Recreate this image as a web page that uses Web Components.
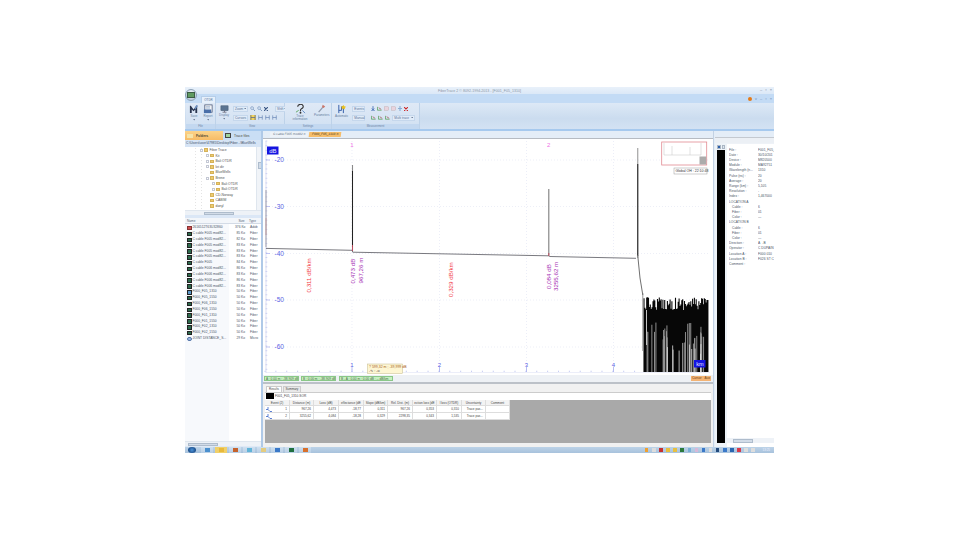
<!DOCTYPE html>
<html><head><meta charset="utf-8"><style>
html,body{margin:0;background:#fff;height:540px;overflow:hidden}
body{font-family:"Liberation Sans",sans-serif;color:#333;padding:87px 0 0 185px;box-sizing:border-box}
</style></head><body>
<ft-app>
  <ft-title slot="title"></ft-title>
  <ft-ribbon slot="ribbon"></ft-ribbon>
  <ft-left slot="left"></ft-left>
  <ft-main slot="main"></ft-main>
  <ft-right slot="right"></ft-right>
  <ft-taskbar slot="task"></ft-taskbar>
</ft-app>
<script>
function def(name,html,init){customElements.define(name,class extends HTMLElement{constructor(){super();this.attachShadow({mode:'open'}).innerHTML=html;if(init)init(this.shadowRoot)}})}
const ic={
 save:'<svg width="10" height="10" viewBox="0 0 11 11"><path d="M1 10V2h1l3 4 3-4h1v8H7V6L5 8 3 6v4z" fill="#2a3650"/><path d="M8 1l2 1-3 4-1-1z" fill="#6c8fc0"/></svg>',
 report:'<svg width="10" height="10" viewBox="0 0 11 11"><rect x="2" y="1" width="8" height="8" fill="#fff" stroke="#3c4a6c" stroke-width=".8"/><rect x="1" y="6" width="8" height="4" fill="#4a6fa8"/><path d="M3 3h5M3 4.500h5" stroke="#5c7fae" stroke-width=".6"/></svg>',
 display:'<svg width="9" height="8" viewBox="0 0 11 10"><rect x="1" y="1" width="9" height="6" fill="#5a7391" stroke="#3c4f66" stroke-width=".6"/><path d="M3 9h5M5.500 7v2" stroke="#667" stroke-width="1"/></svg>',
 info:'<svg width="11" height="10" viewBox="0 0 12 11"><path d="M3 3a3 2.500 0 1 1 4 2.200L6 6.500V8" fill="none" stroke="#333" stroke-width="1.200"/><circle cx="6" cy="9.600" r="1" fill="#333"/><path d="M8 7l3 3" stroke="#5b87c0"/><path d="M1 9l3-2" stroke="#5aa55a"/></svg>',
 params:'<svg width="9" height="9" viewBox="0 0 11 11"><path d="M2 10L7 4" stroke="#8c98ac" stroke-width="1.400"/><path d="M7 1l3 2-2 2-2-1z" fill="#c9776b"/></svg>',
 auto:'<svg width="10" height="10" viewBox="0 0 11 11"><path d="M2 10V1M2 7h3V3h2v7" fill="none" stroke="#2a55a5" stroke-width="1"/><path d="M7 1l1 1.500L10 3 8.500 4.300 9 6 7 5 5 6l.6-1.800L4 3l2-.5z" fill="#ecc11c"/></svg>',
 mag:'<svg width="5" height="5" viewBox="0 0 6 6"><circle cx="2.500" cy="2.500" r="1.700" fill="#dbe8f7" stroke="#6b8ab5" stroke-width=".7"/><path d="M4 4l2 2" stroke="#6b8ab5"/></svg>',
 x:'<svg width="4" height="4" viewBox="0 0 5 5"><path d="M0 0l5 5M5 0L0 5" stroke="#c22" stroke-width="1.300"/></svg>',
 xn:'<svg width="4" height="4" viewBox="0 0 5 5"><path d="M0 0l5 5M5 0L0 5" stroke="#3a5684" stroke-width="1.400"/></svg>',
 cur:'<svg width="5" height="5" viewBox="0 0 7 6"><path d="M1 0v6M6 0v6M1 3h5" stroke="#5f7fb0" stroke-width=".9"/></svg>',
 curY:'<svg width="6" height="5" viewBox="0 0 7 6"><rect width="7" height="6" fill="#f3d35c"/><path d="M1 0v6M6 0v6M1 3h5" stroke="#55688c" stroke-width=".9"/></svg>',
 down:'<svg width="4" height="5" viewBox="0 0 5 6"><path d="M2.500 0v4M0 6h5M1 3l1.500 2L4 3" fill="none" stroke="#2a5bab" stroke-width=".9"/></svg>',
 plug:'<svg width="4" height="5" viewBox="0 0 5 6"><path d="M0 3h5M2.500 0v6" stroke="#8aaed4" stroke-width="1.400"/></svg>',
 red:'<svg width="5" height="5" viewBox="0 0 6 6"><rect x=".5" y="1" width="5" height="4" fill="#e8d3dd" stroke="#b99" stroke-width=".4"/></svg>',
 grn:'<svg width="5" height="5" viewBox="0 0 6 6"><path d="M.5 1v4h5" fill="none" stroke="#4f9a4f" stroke-width=".9"/><path d="M2 2l3 2" stroke="#a66"/></svg>'
};
const drop='<svg width="2.500" height="1.500" viewBox="0 0 3 2"><path d="M0 0h3L1.500 2z" fill="#6a7a94"/></svg>';

def('ft-app',`<style>
:host{display:grid;width:589px;height:366px;grid-template-columns:78px 1fr 61px;grid-template-rows:7px 37px 1fr 6px;grid-template-areas:"t t t" "r r r" "l m x" "b b b";background:#dfe9f6;font-size:3.600px;overflow:hidden}
::slotted([slot=title]){grid-area:t}::slotted([slot=ribbon]){grid-area:r}::slotted([slot=left]){grid-area:l}::slotted([slot=main]){grid-area:m}::slotted([slot=right]){grid-area:x}::slotted([slot=task]){grid-area:b}
</style><slot name="title"></slot><slot name="ribbon"></slot><slot name="left"></slot><slot name="main"></slot><slot name="right"></slot><slot name="task"></slot>`);

def('ft-title',`<style>
:host{display:flex;align-items:center;justify-content:center;background:linear-gradient(#e9f1fa,#dbe8f7);font-size:3.600px;color:#8a96a6;position:relative;padding-left:0}
.w{position:absolute;right:2px;top:1px;display:flex;gap:3px;color:#6d7c90;font-size:4px;line-height:4px}
</style><span>FiberTrace 2 © 8092-1994-2013 - [F001_F05_1310]</span><span class="w"><span>–</span><span>▫</span><span>×</span></span>`);

def('ft-ribbon',`<style>
:host{display:flex;flex-direction:column;font-size:3.300px;color:#5a7296;position:relative}
.tabs{height:9px;background:#c3dbf5;display:flex;align-items:flex-end;padding-left:16px;box-sizing:border-box;position:relative}
.tab{height:7px;width:15px;background:#e6f0fb;border:.5px solid #b6cee9;border-bottom:0;box-sizing:border-box;display:flex;align-items:center;justify-content:center;font-size:3px;color:#55709a}
.orb{position:absolute;left:0;top:-5px;width:12px;height:12px;border-radius:50%;background:radial-gradient(circle at 50% 30%,#f2f7fc,#b0c2d4);border:.5px solid #8ea2b6;box-sizing:border-box;display:flex;align-items:center;justify-content:center;z-index:2}
.orb i{display:block;width:6px;height:4px;background:#5f9a60;border:.5px solid #3c5c44}
.help{position:absolute;right:2px;top:3px;display:flex;gap:3px;font-size:4px;line-height:4px;color:#6d8bb3;align-items:center}
.help b{display:block;width:4px;height:4px;border-radius:50%;background:#e47a18}
.body{height:26px;background:linear-gradient(#dde9f6 0,#cbdcef 60%,#d3e2f3 100%);display:flex;box-sizing:border-box;padding-left:1px}
.g{display:grid;grid-template-rows:1fr 5px;border-right:.5px solid #bdd2e9;background:linear-gradient(#dfe9f6,#d0e0f2);box-sizing:border-box}
.g>.c{display:flex;align-items:flex-start;box-sizing:border-box;padding-top:1px;min-height:0}
.lab{background:#c3d8f0;text-align:center;line-height:5px;font-size:2.900px;color:#6d84a4}
.big{display:flex;flex-direction:column;align-items:center;font-size:3px;line-height:3.400px;text-align:center;color:#66809f;gap:1px;white-space:nowrap}
.big svg{display:block}
.col{display:flex;flex-direction:column;gap:2px;padding-top:1px}
.row{display:flex;align-items:center;gap:2px;height:7px;font-size:3.200px;white-space:nowrap}
.bx{background:#e0ebf8;border:.5px solid #c5d7ec;padding:0 1px;display:inline-flex;align-items:center;justify-content:space-between;height:6px;box-sizing:border-box;width:15px;color:#5a7296}
.line{height:2px;background:#a6c9ee}
.sp{flex:1}
</style>
<div class="tabs"><div class="orb"><i></i></div><div class="tab">OTDR</div><div class="help"><b></b><span>˅</span><span>–</span><span>▫</span><span>×</span></div></div>
<div class="body">
 <div class="g" style="width:30px"><div class="c" style="padding-left:3px;gap:4px"><div class="big">${ic.save}<span>Save</span>${drop}</div><div class="big">${ic.report}<span>Report</span>${drop}</div></div><div class="lab">File</div></div>
 <div class="g" style="width:69px"><div class="c" style="padding-left:2px;gap:3px"><div class="big" style="width:12px;padding-top:1px">${ic.display}<span>Display</span>${drop}</div><div class="col"><div class="row"><span class="bx">Zoom ${drop}</span>${ic.mag}${ic.mag}${ic.xn}<span class="bx" style="margin-left:5px;width:13px">Shift ${drop}</span></div><div class="row"><span class="bx">Cursors ${drop}</span>${ic.curY}${ic.cur}${ic.cur}${ic.cur}</div></div></div><div class="lab">View</div></div>
 <div class="g" style="width:47px"><div class="c" style="padding-left:8px;gap:7px"><div class="big" style="line-height:3px;width:14px">${ic.info}<span>Trace<br>information</span></div><div class="big">${ic.params}<span>Parameters</span></div></div><div class="lab">Settings</div></div>
 <div class="g" style="width:88px"><div class="c" style="padding-left:3px;gap:4px"><div class="big">${ic.auto}<span>Automatic</span></div><div class="col"><div class="row"><span class="bx" style="width:13px">Events ${drop}</span><span style="width:2px"></span>${ic.down}${ic.grn}${ic.red}${ic.red}${ic.plug}${ic.x}</div><div class="row"><span class="bx" style="width:13px">Manual ${drop}</span><span style="width:2px"></span>${ic.grn}${ic.grn}${ic.grn}<span class="bx" style="width:23px">Multi trace ${drop}</span></div></div></div><div class="lab">Measurement</div></div>
 <div class="sp"></div>
</div><div class="line"></div>`);

def('ft-left',`<style>
:host{display:flex;flex-direction:column;background:#fff;border-right:2px solid #afc9e7;box-sizing:border-box;font-size:3.400px;color:#4a5668;min-height:0;height:316px}
.tb{display:flex;height:9px;flex:none}
.tb div{display:flex;align-items:center;gap:3px;padding-left:2px;box-sizing:border-box;font-weight:bold;color:#4a4a34}
.a{width:38px;background:linear-gradient(#fbd38a,#f7bc66)}.a i{width:6px;height:4px;background:#f6e4a8;display:block}
.b{flex:1;background:#c9def5;font-weight:normal!important}.b i{width:6px;height:4.500px;background:#9fd49b;border:.5px solid #444;box-sizing:border-box;display:block}
.path{height:7px;flex:none;background:#d6e4f5;line-height:7px;padding-left:1px;white-space:nowrap;overflow:hidden;color:#3e5068;font-size:3.300px}
.tree{height:63px;flex:none;position:relative;display:flex;overflow:hidden}
.ls{flex:1;padding-top:.3px;background-image:repeating-linear-gradient(#c8c8c8 0 .5px,transparent .5px 1.500px),repeating-linear-gradient(#c8c8c8 0 .5px,transparent .5px 1.500px);background-size:.5px 100%,.5px 100%;background-position:10px 0,16px 0;background-repeat:no-repeat}
.it{height:5.600px;display:flex;align-items:center;gap:1.500px;white-space:nowrap;color:#525252}
.it i{width:4px;height:3.500px;background:#edcb6f;border:.5px solid #d5b25a;box-sizing:border-box;display:block}
.it u{width:3px;height:3px;background:#fff;border:.5px solid #c4c8d4;box-sizing:border-box;display:block;margin-right:-.5px}
.it u.n{visibility:hidden}
.sv{width:5px;background:#f1f4f8;border-left:.5px solid #dfe6ee;position:relative;box-sizing:border-box}
.sv b{position:absolute;left:.5px;top:15px;width:4px;height:7px;background:#d2dce8;border:.5px solid #aebccc;box-sizing:border-box}
.sh{height:5px;flex:none;background:#eef2f7;position:relative;border-top:.5px solid #dfe6ee;box-sizing:border-box}
.sh b{position:absolute;left:19px;top:.5px;width:30px;height:3.500px;background:#d2dce8;border:.5px solid #aebccc;box-sizing:border-box}
.gap{height:3px;flex:none;background:#dbe7f6}
.hd{display:grid;grid-template-columns:47px 15px 1fr;height:6px;flex:none;background:#f3f6fa;border-bottom:.5px solid #d3dbe6;line-height:6px;box-sizing:border-box;padding-left:2px;color:#556578;font-size:3.200px}
.hd span:nth-child(2){text-align:center}
.list{flex:1;min-height:0;display:block;padding-top:1.300px;background:linear-gradient(90deg,#f7f9fc 44px,#fff 44px)}
.r{display:grid;grid-template-columns:48px 15px 1fr;height:5.830px;line-height:5.830px;padding-left:2px;white-space:nowrap;overflow:hidden;font-size:3.300px}
.r>span:first-child{display:flex;align-items:center;gap:1px;overflow:hidden}
.r i{width:4.500px;height:4.500px;display:block;flex:none;background:#2c6a4c;border:.5px solid #222;box-sizing:border-box}
.r i.bl{background:#5b97c9}.r i.rd{background:#d05050;border-color:#833}.r i.lt{background:#9cb8e0;border-color:#5676a8;border-radius:50%}
.r span:nth-child(2){text-align:right;padding-right:5px}
.end{height:1px;flex:none;background:#dfe9f6}
</style>
<div class="tb"><div class="a"><i></i>Folders</div><div class="b"><i></i>Trace files</div></div>
<div class="path">C:\\Users\\user\\47985\\Desktop\\Fiber...\\BlueWells</div>
<div class="tree"><div class="ls" id="tree"></div><div class="sv"><b></b></div></div>
<div class="sh"><b></b></div>
<div class="gap"></div>
<div class="hd"><span>Name</span><span>Size</span><span>Type</span></div>
<div class="list" id="list"></div>
<div class="sh"><b style="left:3px;width:30px"></b></div>
<div class="end"></div>`,s=>{
 const t=[[15,'Fiber Trace',1],[21,'Kit',1],[21,'Bali OTDR',1],[21,'kri dir',1],[21,'BlueWells',0],[21,'Brene',1],[27,'Bali OTDR',1],[27,'Bali OTDR',1],[21,'CD-Norway',0],[21,'CABIM',0],[21,'danyl',0]];
 s.getElementById('tree').innerHTML=t.map(([p,n,e])=>`<div class="it" style="padding-left:${p}px"><u class="${e?'':'n'}"></u><i></i><span>${n}</span></div>`).join('');
 const l=[['rd','2616512T63U32860','376 Ko','Adob'],['','C cable F005 mod82...','85 Ko','Fiber'],['','C cable F005 mod82...','82 Ko','Fiber'],['','C cable F005 mod82...','83 Ko','Fiber'],['','C cable F005 mod82...','83 Ko','Fiber'],['','C cable F005 mod82...','83 Ko','Fiber'],['','C cable F005','84 Ko','Fiber'],['','C cable F006 mod82...','86 Ko','Fiber'],['','C cable F006 mod82...','83 Ko','Fiber'],['','C cable F006 mod82...','86 Ko','Fiber'],['','C cable F006 mod82...','83 Ko','Fiber'],['bl','F000_F05_1310','50 Ko','Fiber'],['','F000_F05_1550','50 Ko','Fiber'],['','F000_F06_1310','50 Ko','Fiber'],['','F000_F06_1550','50 Ko','Fiber'],['','F000_F01_1310','50 Ko','Fiber'],['','F000_F01_1550','50 Ko','Fiber'],['','F000_F02_1310','50 Ko','Fiber'],['','F000_F02_1550','50 Ko','Fiber'],['lt','JOINT DISTANCE_S...','29 Ko','Micro']];
 s.getElementById('list').innerHTML=l.map(([c,n,a,b])=>`<div class="r"><span><i class="${c}"></i>${n}</span><span>${a}</span><span>${b}</span></div>`).join('');
});

const W=448,H=236;
def('ft-chart',`<style>
:host{display:block;height:${H}px;flex:none;background:#fff}
svg{display:block;font-family:"Liberation Sans",sans-serif}
</style><svg id="s" width="${W}" height="${H}" viewBox="0 0 ${W} ${H}"></svg>`,s=>{
 const X=x=>x-263,Y=y=>y-139;let o='';
 [160,206.500,253.500,300,347].forEach(y=>o+=`<path d="M${X(266)} ${Y(y)}H${X(710)}" stroke="#e0e4f2" stroke-width=".6" stroke-dasharray="1 2"/>`);
 [352,439.500,526.500,613.500].forEach(x=>o+=`<path d="M${X(x)} ${Y(141)}V${Y(372)}" stroke="#dfe3f4" stroke-width=".6" stroke-dasharray="1 2"/>`);
 o+=`<path d="M${X(266)} ${Y(141)}V${Y(373)}" stroke="#c6cbea" stroke-width=".6"/>`;
 for(let y=141;y<372;y+=4.660)o+=`<path d="M${X(265.500)} ${Y(y)}h1.800" stroke="#b6bdee" stroke-width=".6"/>`;
 [['-20',160],['-30',206.500],['-40',253.500],['-50',300],['-60',347]].forEach(([t,y])=>{o+=`<path d="M${X(266)} ${Y(y)}h4" stroke="#9aa1ec" stroke-width=".6"/><text x="${X(274.500)}" y="${Y(y)+2.400}" font-size="6.500" fill="#5a62e4">${t}</text>`});
 for(let x=265;x<640;x+=10.870)o+=`<path d="M${X(x)} ${Y(372)}v-1.300" stroke="#b0b7ee" stroke-width=".7"/>`;
 o+=`<path d="M${X(266)} ${Y(372.500)}H${X(710)}" stroke="#d8dcf2" stroke-width=".5"/>`;
 [['1',352],['2',439.500],['3',526.500],['4',613.500]].forEach(([t,x])=>{o+=`<path d="M${X(x)} ${Y(372)}v-5" stroke="#9aa1ec" stroke-width=".7"/><text x="${X(x)}" y="${Y(366.500)}" text-anchor="middle" font-size="6" fill="#5a62e4">${t}</text>`});
 o+=`<rect x="${X(267)}" y="${Y(146.500)}" width="11.500" height="8" fill="#1414e0"/><text x="${X(272.800)}" y="${Y(152.800)}" text-anchor="middle" font-size="6" fill="#e8e8ff">dB</text>`;
 o+=`<text x="${X(352)}" y="${Y(146.500)}" text-anchor="middle" font-size="6" fill="#ef6fe6">1</text><text x="${X(548.700)}" y="${Y(146.500)}" text-anchor="middle" font-size="6" fill="#ef6fe6">2</text>`;
 o+=`<path d="M${X(266)} ${Y(190)}V${Y(247)}" stroke="#9a9aa4" stroke-width=".9"/><path d="M${X(266)} ${Y(218)}V${Y(235)}" stroke="#c49a9a" stroke-width=".8"/>`;
 let seed=12345;const rnd=()=>(seed=(seed*16807)%2147483647)/2147483647;
 let nb='';
 for(let x=644;x<708.500;x+=.9){const top=297+rnd()*13;nb+=`M${X(x)} ${Y(top)}V${Y(372)}`}
 o+=`<path d="${nb}" stroke="#070707" stroke-width="1.100"/>`;
 let wh='',gr='';
 for(let i=0;i<10;i++){const x=650+rnd()*57,y=342+rnd()*12;wh+=`M${X(x)} ${Y(y)}V${Y(372)}`}
 for(let i=0;i<26;i++){const x=646+rnd()*62,y=322+rnd()*22;gr+=`M${X(x)} ${Y(y)}V${Y(372)}`}
 o+=`<path d="${gr}" stroke="#9c9c9c" stroke-width=".9"/><path d="${wh}" stroke="#dcdcdc" stroke-width=".8"/>`;
 o+=`<path d="M${X(642.800)} ${Y(293)}V${Y(351)}" stroke="#8a8a8a" stroke-width=".9"/><path d="M${X(646.500)} ${Y(310)}V${Y(345)}" stroke="#c4c4c4" stroke-width="1"/>`;
 o+=`<path d="M${X(266)} ${Y(248.400)}L${X(352)} ${Y(250.300)}L${X(352.800)} ${Y(252.200)}L${X(548.500)} ${Y(255.800)}L${X(549.500)} ${Y(256.500)}L${X(636)} ${Y(258.300)}" fill="none" stroke="#6a6a70" stroke-width=".9"/>`;
 o+=`<path d="M${X(352.500)} ${Y(165)}V${Y(251)}" stroke="#8a8a8a" stroke-width="1.100"/><path d="M${X(352.500)} ${Y(171)}V${Y(247)}" stroke="#222" stroke-width="1"/><path d="M${X(352.500)} ${Y(245)}V${Y(251)}" stroke="#c2455a" stroke-width=".9"/>`;
 o+=`<path d="M${X(548.800)} ${Y(189)}V${Y(256)}" stroke="#7d7d7d" stroke-width="1.100"/><path d="M${X(548.800)} ${Y(253)}V${Y(256)}" stroke="#c2455a" stroke-width=".9"/>`;
 o+=`<path d="M${X(637.700)} ${Y(148)}V${Y(258)}" stroke="#aaaaaa" stroke-width="1.300"/><path d="M${X(637.700)} ${Y(164)}V${Y(256)}" stroke="#3a3a3a" stroke-width="1.200"/>`;
 o+=`<path d="M${X(637.700)} ${Y(255)}L${X(640)} ${Y(278)}L${X(642.800)} ${Y(295)}" fill="none" stroke="#707070" stroke-width="1"/>`;
 const rt=(x,y,t,c,sz)=>`<text transform="translate(${X(x)} ${Y(y)}) rotate(-90)" font-size="${sz||6.200}" fill="${c}">${t}</text>`;
 o+=rt(310.500,292.500,'0,311 dB/km','#f2393f');
 o+=rt(355,283.500,'0,473 dB','#a52fb4')+rt(362.500,283.500,'967,26 m','#a52fb4');
 o+=rt(453,297,'0,329 dB/km','#f2393f');
 o+=rt(551,289,'0,084 dB','#a52fb4')+rt(558,291,'3255,62 m','#a52fb4');
 o+=`<rect x="${X(661.700)}" y="${Y(142)}" width="45" height="23" fill="#fff" stroke="#e28a92" stroke-width=".8"/><path d="M${X(664)} ${Y(143)}V${Y(155)}H${X(701)}V${Y(143)}M${X(672)} ${Y(155)}V${Y(146)}M${X(690)} ${Y(155)}V${Y(147)}" fill="none" stroke="#cfcfcf" stroke-width=".6"/><rect x="${X(699.500)}" y="${Y(156.500)}" width="6.800" height="8" fill="#acacac"/>`;
 o+=`<rect x="${X(674)}" y="${Y(168)}" width="33" height="6" fill="#fff" stroke="#9a9a9a" stroke-width=".5"/><text x="${X(675.500)}" y="${Y(172.400)}" font-size="3.500" fill="#333">Global OH : 22:10:48</text>`;
 o+=`<rect x="${X(694)}" y="${Y(360)}" width="11.500" height="7.500" fill="#1414e0"/><text x="${X(699.800)}" y="${Y(366)}" text-anchor="middle" font-size="5.500" fill="#e8e8ff">km</text>`;
 o+=`<rect x="${X(367.500)}" y="${Y(364)}" width="35" height="9.500" fill="#fdf6d3" stroke="#c4b98a" stroke-width=".5"/><text x="${X(369)}" y="${Y(368)}" font-size="3.500" fill="#a8601c">? 599,32 m ; -39,999 dB</text><text x="${X(369)}" y="${Y(372.200)}" font-size="3.500" fill="#333">-∿ : -∞</text>`;
 s.getElementById('s').innerHTML=o;
});

def('ft-main',`<style>
:host{display:flex;flex-direction:column;min-width:0;height:316px;background:#e9eef4;font-size:3.400px;color:#444}
.tabs{height:8px;flex:none;background:#e4edf7;display:flex;align-items:flex-start;padding:1px 0 0 7px;gap:.5px;box-sizing:border-box;border-bottom:1px solid #b6bbc2}
.t{height:5px;line-height:5px;padding:0 2px 0 3px;background:#edf2f8;color:#66758a;white-space:nowrap;font-size:3.200px;transform:skewX(-8deg)}
.t.on{background:#f6bd6a;color:#4a3c20}
.st{height:7px;flex:none;display:flex;align-items:center;gap:2px;padding:0 0 0 1px;background:#eef1f5;box-sizing:border-box;font-size:3.200px}
.gr{background:#c6f0c0;border:.5px solid #8ac888;height:5px;line-height:4.500px;padding:0 1px;white-space:nowrap;color:#4a6a48;box-sizing:border-box;width:35px;overflow:hidden}
.or{margin-left:auto;margin-right:2px;background:#f3b374;height:4.500px;line-height:4.500px;padding:0 1px;color:#6a4418;display:flex;gap:3px}
.sp{height:1.500px;flex:none;background:#bcc1c8}
.res{flex:1;min-height:0;display:flex;flex-direction:column;background:#f1f1f1;padding:2px 2px 0 2px;box-sizing:border-box}
.rt{display:flex;height:6px;flex:none;gap:.5px;align-items:flex-end;padding-left:1px}
.rt span{height:6px;line-height:5.500px;padding:0 2px;background:#fff;border:.5px solid #ccc;border-bottom:0;box-sizing:border-box;font-size:3px}
.rt span+span{background:#e8e8e8}
.fh{height:8px;flex:none;background:#fff;display:flex;align-items:center;gap:1px;border-top:.5px solid #ccc;box-sizing:border-box;font-size:3.200px}
.fh i{width:8px;height:5.500px;background:#000;display:block;margin-left:1px}
.tbl{flex:1;min-height:0;background:#a9a9a9;margin-bottom:4px;display:flex;flex-direction:column}
.row{display:grid;grid-template-columns:25px 24px 25px 25px 24px 25px 24px 25px 24px 24px;width:245px;background:#fff}
.row>div{height:6.700px;line-height:6.700px;border-right:.5px solid #ddd;border-bottom:.5px solid #ddd;box-sizing:border-box;text-align:right;padding-right:2px;white-space:nowrap;overflow:hidden;font-size:3.100px}
.h>div{background:#f3f3f3;text-align:center;padding:0}
.row svg{display:block;margin:.8px 0 0 1px}
.row>div:first-child{display:flex;justify-content:space-between}
.h>div:first-child{display:block}
</style>
<div class="tabs"><span class="t">C cable F005 mod82 ✕</span><span class="t on">F000_F05_1310 ✕</span></div>
<ft-chart></ft-chart>
<div class="st"><span class="gr">A : 0,00 m ; -38,909 dB</span><span class="gr">B : 0,00 m ; -38,909 dB</span><span class="gr" style="width:54px;margin-left:1px">B - A : 0,00 m ; 0,00 dB ; -- dB/km</span><span class="or"><span>Cursor</span><span>Aux</span></span></div>
<div class="sp"></div>
<div class="res">
<div class="rt"><span>Results</span><span>Summary</span></div>
<div class="fh"><i></i><span>F001_F05_1310.SOR</span></div>
<div class="tbl"><div class="row h"><div>Event (2)</div><div>Distance (m)</div><div>Loss (dB)</div><div>eflectance (dE</div><div>Slope (dB/km)</div><div>Rel. Dist. (m)</div><div>ection loss (dE</div><div>l loss (OTDR)</div><div>Uncertainty</div><div>Comment</div></div>
<div class="row"><div>${'<svg width="6" height="5" viewBox="0 0 6 5"><path d="M0 2.500h2V0M2 2.500l2 2h2" fill="none" stroke="#3a64c8" stroke-width=".8"/></svg>'}<span>1</span></div><div>967,26</div><div>4,473</div><div>-18,77</div><div>0,311</div><div>967,26</div><div>0,353</div><div>0,310</div><div>Trace pas...</div><div></div></div>
<div class="row"><div>${'<svg width="6" height="5" viewBox="0 0 6 5"><path d="M0 2.500h2V0M2 2.500l2 2h2" fill="none" stroke="#3a64c8" stroke-width=".8"/></svg>'}<span>2</span></div><div>3255,62</div><div>4,084</div><div>-18,28</div><div>0,329</div><div>2298,35</div><div>0,343</div><div>1,535</div><div>Trace pas...</div><div></div></div>
</div></div>`);

def('ft-right',`<style>
:host{display:flex;background:#e4edf7;height:316px;box-sizing:border-box;padding:6px 0 0 1px;font-size:3.400px;color:#4a5668;border-left:.5px solid #c3d2e4}
.w{flex:1;display:flex;flex-direction:column;background:#eef3f8;min-width:0;border-top:1px solid #c4c9d0}
.hd{height:5px;flex:none;background:#ecf0f5}
.bd{flex:1;display:flex;min-height:0}
.lt{width:10px;flex:none;display:flex;flex-direction:column;padding-left:2px;box-sizing:border-box}
.ics{height:7px;display:flex;gap:1px;align-items:center;flex:none}
.ics i{width:3.500px;height:4px;display:block;background:#dde5ee;border:.5px solid #aab6c4;box-sizing:border-box}.ics i:first-child{background:#2b5eaa}
.blk{flex:1;background:#000;width:7.500px;margin-bottom:4px}
.pn{flex:1;min-width:0;background:#fff;display:flex;flex-direction:column;margin-left:2px}
.tp{height:1px;flex:none;background:#eef2f7}
.p{flex:1;padding:3.500px 0 0 2px;overflow:hidden}
.r{display:grid;grid-template-columns:29px 1fr;height:5.210px;line-height:5.210px;white-space:nowrap;overflow:hidden;font-size:3.300px}
.r span{overflow:hidden}
.sb{height:5px;flex:none;background:#eef2f7;position:relative;margin-bottom:4px}
.sb b{position:absolute;left:6px;top:.5px;width:20px;height:4px;background:#d2dce8;border:.5px solid #aebccc;box-sizing:border-box}
</style>
<div class="w"><div class="hd"></div><div class="bd">
 <div class="lt"><div class="ics"><i></i><i></i></div><div class="blk"></div></div>
 <div class="pn"><div class="tp"></div><div class="p" id="p"></div><div class="sb"><b></b></div></div>
</div></div>`,s=>{
 const d=[['File :','F001_F05_'],['Date :','30/10/201'],['Device :','M820500'],['Module :','MA92751'],['Wavelength (n...','1310'],['Pulse (ns) :','20'],['Average :','20'],['Range (km) :','5,105'],['Resolution :','-'],['Index :','1,467000'],['LOCATION A',''],['  Cable :','6'],['  Fiber :','01'],['  Color :','—'],['LOCATION B',''],['  Cable :','6'],['  Fiber :','01'],['  Color :','—'],['Direction :','A→B'],['Operator :','C DUPAIN'],['Location A :','F000 010'],['Location B :','F026 ST C'],['Comment :','']];
 s.getElementById('p').innerHTML=d.map(([a,b])=>`<div class="r"><span style="${a.startsWith(' ')?'padding-left:3px':''}">${a.trim()}</span><span>${b}</span></div>`).join('');
});

def('ft-taskbar',`<style>
:host{display:flex;align-items:stretch;background:linear-gradient(#bdd3e8,#a8c2dc);height:6px;gap:2px;position:relative;overflow:hidden}
.s{width:8px;background:radial-gradient(circle,#4a92d8,#1d4f8c 70%);border-radius:50%;margin:0 3px 0 3px;flex:none}
.b{width:12px;background:linear-gradient(#cfe0f0,#b9cfe5);box-sizing:border-box;display:flex;align-items:center;justify-content:center;flex:none}
.b i{width:5px;height:4px;display:block}
.tr{margin-left:auto;display:flex;align-items:center;gap:3.600px;padding-right:4px;font-size:3px;color:#eef}
.tr i{width:3.500px;height:3.500px;display:block}
</style><div class="s"></div>
<div class="b"><i style="background:#4a8fce"></i></div><div class="b" style="background:#f0d06a"><i style="background:#e8b93c"></i></div><div class="b"><i style="background:#c5622c"></i></div><div class="b"><i style="background:#62b4d8"></i></div><div class="b"><i style="background:#e4cc80"></i></div><div class="b"><i style="background:#3a78c8"></i></div><div class="b"><i style="background:#1f6f3f"></i></div><div class="b"><i style="background:#d8702c"></i></div>
<div class="tr"><i style="background:#f0a030"></i><i style="background:#ddd"></i><i style="background:#c83030"></i><i style="background:#e8c040"></i><i style="background:#e8c040"></i><i style="background:#2c7a3c"></i><i style="background:#7ab0d8"></i><i style="background:#d8b8d8"></i><i style="background:#3a78c8"></i><i style="background:#ddd"></i><i style="background:#234a7c"></i><i style="background:#3a78c8"></i><i style="background:#2a66b0"></i><i style="background:#d83a4a"></i><i style="background:#ddd"></i><i style="background:#ddd"></i><span style="margin-left:4px">13:25</span></div>`);
</script></body></html>
